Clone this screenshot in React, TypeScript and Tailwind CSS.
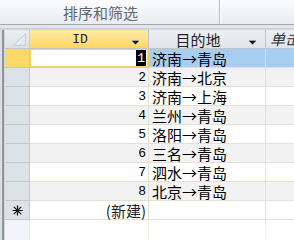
import type { ReactNode } from 'react'

const rows = [
  { id: 1, dest: '济南→青岛' },
  { id: 2, dest: '济南→北京' },
  { id: 3, dest: '济南→上海' },
  { id: 4, dest: '兰州→青岛' },
  { id: 5, dest: '洛阳→青岛' },
  { id: 6, dest: '三名→青岛' },
  { id: 7, dest: '泗水→青岛' },
  { id: 8, dest: '北京→青岛' },
]

const cjk = "font-['Noto_Sans_CJK_SC',sans-serif]"
const mono = "font-['Liberation_Mono','Noto_Sans_CJK_SC',monospace]"

function FilterArrow() {
  return (
    <svg width="9" height="6" viewBox="0 0 9 6" className="shrink-0">
      <path d="M1 1.5h7" stroke="#9aa0a8" strokeWidth="1" />
      <path d="M1 2h7l-3.5 3.5z" fill="#1a1a1a" />
    </svg>
  )
}

function HeaderCell({ children, active, width }: { children: ReactNode; active?: boolean; width: string }) {
  return (
    <div
      className={`${width} relative flex h-full shrink-0 items-center justify-center border-r border-[#bfc4cb] pr-[18px] ${
        active ? 'bg-gradient-to-b from-[#ffeba6] to-[#fdd662]' : 'bg-gradient-to-b from-[#edf0f3] to-[#dfe3e8]'
      }`}
    >
      {children}
      <span className="absolute right-[8px] top-[9px]">
        <FilterArrow />
      </span>
    </div>
  )
}

function NewMark() {
  return (
    <svg width="11" height="11" viewBox="0 0 11 11">
      <g stroke="#111" strokeWidth="1.2">
        <path d="M5.5 0.5v10M0.5 5.5h10M1.8 1.8l7.4 7.4M9.2 1.8l-7.4 7.4" />
      </g>
    </svg>
  )
}

export default function App() {
  return (
    <div className="h-[240px] w-[294px] overflow-hidden bg-white">
      {/* ribbon group */}
      <div className="flex h-[24px] bg-gradient-to-b from-[#fbfcfd] to-[#e9ecf0]">
        <div className={`${cjk} flex w-[219px] shrink-0 items-center pl-[63px] text-[15px] leading-none text-[#5f6771]`}>排序和筛选</div>
        <div className="w-px shrink-0 bg-[#b7bcc3]" />
        <div className="w-px shrink-0 bg-white" />
      </div>
      <div className="h-px bg-[#a3a8af]" />
      <div className="h-[3px] bg-[#e3e6ea]" />
      <div className="h-[2px] bg-[#cfd3d9]" />

      <div className="flex">
        <div className="w-[2px] shrink-0 bg-[#dcdfe4]" />
        <div className="w-[2px] shrink-0 bg-[#8f949b]" />
        <div className="w-px shrink-0 bg-[#d3d7dc]" />

        <div className="min-w-0 flex-1 overflow-hidden">
          {/* header */}
          <div className="flex h-[19px] border-b border-[#bfc4cb]">
            <div className="flex h-full w-[25px] shrink-0 items-end justify-end border-r border-[#c3c8cf] bg-gradient-to-b from-[#eceff2] to-[#dde1e6] pb-[2px] pr-[3px]">
              <svg width="13" height="13" viewBox="0 0 13 13">
                <path d="M12.5 0.5v12h-12z" fill="#e7eaee" stroke="#c6cbd2" strokeWidth="1" />
              </svg>
            </div>
            <HeaderCell active width="w-[119px]">
              <span className={`${mono} text-[13px] leading-none text-[#222]`}>ID</span>
            </HeaderCell>
            <HeaderCell width="w-[117px]">
              <span className={`${cjk} text-[15px] leading-none text-[#222]`}>目的地</span>
            </HeaderCell>
            <div className={`${cjk} flex h-full min-w-0 flex-1 items-center overflow-hidden whitespace-nowrap bg-gradient-to-b from-[#edf0f3] to-[#dfe3e8] pl-[4px] text-[15px] italic text-[#333]`}>
              单击以添加
            </div>
          </div>

          {rows.map((r, i) => {
            const sel = i === 0
            const bg = i % 2 === 1 ? 'bg-[#f2f2f2]' : 'bg-white'
            return (
              <div key={r.id} className="flex h-[19px]">
                <div
                  className={`w-[25px] shrink-0 border-b border-r border-[#c3c8cf] ${
                    sel ? 'bg-[#fcd86a]' : 'bg-[#dde2e8]'
                  }`}
                />
                <div
                  className={`${mono} flex w-[119px] shrink-0 items-center justify-end border-b border-r pr-[2px] text-[13px] leading-none ${
                    sel ? 'border-[#f4cf55] bg-white shadow-[inset_0_0_0_1px_#f6d76f]' : `border-[#e4e1d2] ${bg}`
                  } text-black`}
                >
                  <span className={`flex h-[16px] items-center ${sel ? 'bg-black px-px text-white' : ''}`}>{r.id}</span>
                </div>
                <div
                  className={`${cjk} flex w-[117px] shrink-0 items-center border-b border-r pl-[3px] text-[15px] leading-none text-black ${
                    sel ? 'border-[#e4e1d2] bg-[#a7cef0]' : `border-[#e4e1d2] ${bg}`
                  }`}
                >
                  {r.dest}
                </div>
                <div className={`min-w-0 flex-1 border-b border-[#e4e1d2] ${sel ? 'bg-[#a7cef0]' : bg}`} />
              </div>
            )
          })}

          {/* new record */}
          <div className="flex h-[19px]">
            <div className="flex w-[25px] shrink-0 items-center justify-center border-b border-r border-[#c3c8cf] bg-[#dde2e8]">
              <NewMark />
            </div>
            <div className={`${cjk} flex w-[119px] shrink-0 items-center justify-end border-b border-r border-[#e4e1d2] pr-[2px] text-[15px] leading-none text-[#222]`}>
              (新建)
            </div>
            <div className="w-[117px] shrink-0 border-b border-r border-[#e4e1d2]" />
            <div className="min-w-0 flex-1 border-b border-[#e4e1d2]" />
          </div>

          {/* empty area */}
          <div className="flex h-[30px]">
            <div className="w-[25px] shrink-0 border-r border-[#e3e6ee] bg-[#f3f4fb]" />
            <div className="w-[119px] shrink-0 border-r border-[#f1efe6]" />
            <div className="w-[117px] shrink-0 border-r border-[#f1efe6]" />
            <div className="min-w-0 flex-1" />
          </div>
        </div>
      </div>
    </div>
  )
}
